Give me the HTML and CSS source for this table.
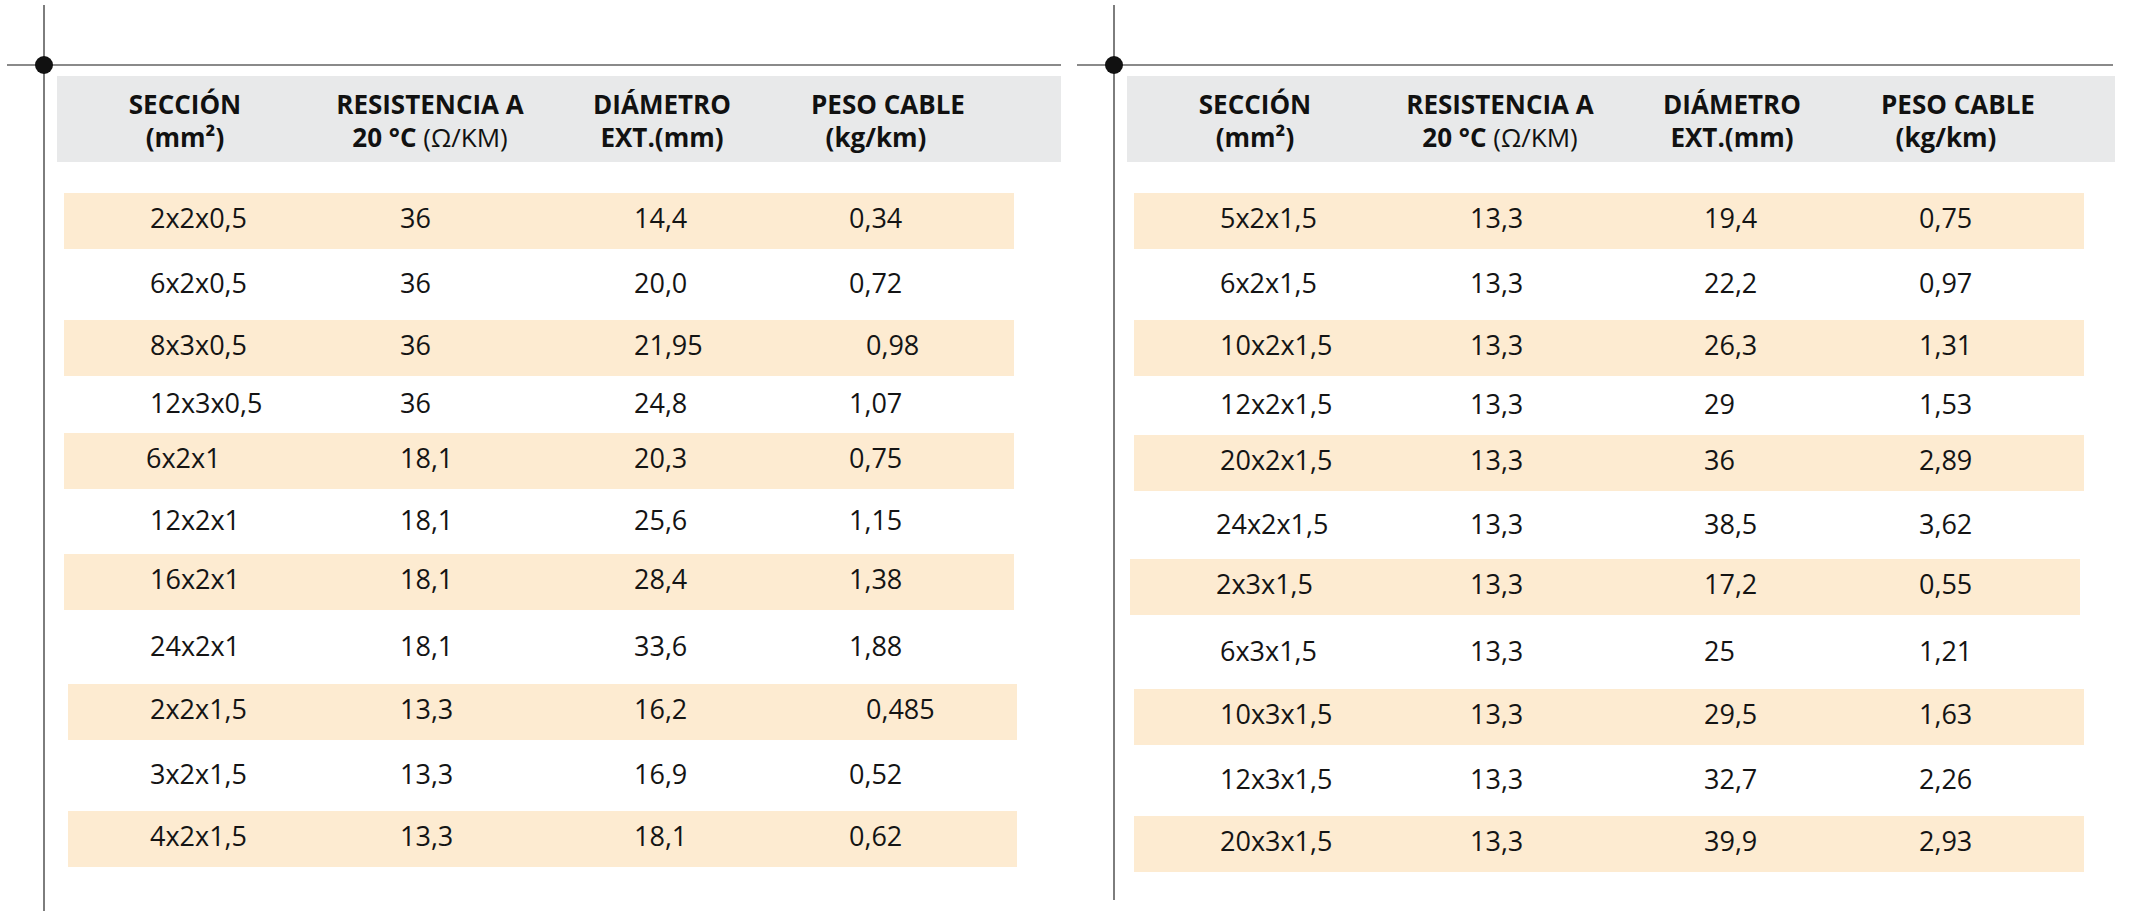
FILE: index.html
```html
<!DOCTYPE html>
<html lang="es">
<head>
<meta charset="utf-8">
<title>Tabla de cables</title>
<link rel="stylesheet" href="styles.css">
</head>
<body>
<div class="sheet">
  <section class="panel panel-a">
    <div class="frame">
      <span class="dot"></span>
      <div class="rule"></div>
      <div class="thead">
        <div class="th">SECCIÓN<br>(mm²)</div>
        <div class="th">RESISTENCIA A<br>20 °C <span class="reg">(Ω/KM)</span></div>
        <div class="th">DIÁMETRO<br>EXT.(mm)</div>
        <div class="th th-last">PESO CABLE<br><span class="unit">(kg/km)</span></div>
      </div>
      <div class="tbody">
        <div class="row hl"><span>2x2x0,5</span><span>36</span><span>14,4</span><span>0,34</span></div>
        <div class="row"><span>6x2x0,5</span><span>36</span><span>20,0</span><span>0,72</span></div>
        <div class="row hl"><span>8x3x0,5</span><span>36</span><span>21,95</span><span class="nudge">0,98</span></div>
        <div class="row"><span>12x3x0,5</span><span>36</span><span>24,8</span><span>1,07</span></div>
        <div class="row hl"><span class="pull">6x2x1</span><span>18,1</span><span>20,3</span><span>0,75</span></div>
        <div class="row"><span>12x2x1</span><span>18,1</span><span>25,6</span><span>1,15</span></div>
        <div class="row hl"><span>16x2x1</span><span>18,1</span><span>28,4</span><span>1,38</span></div>
        <div class="row"><span>24x2x1</span><span>18,1</span><span>33,6</span><span>1,88</span></div>
        <div class="row hl hl-right"><span>2x2x1,5</span><span>13,3</span><span>16,2</span><span class="nudge">0,485</span></div>
        <div class="row"><span>3x2x1,5</span><span>13,3</span><span>16,9</span><span>0,52</span></div>
        <div class="row hl hl-right"><span>4x2x1,5</span><span>13,3</span><span>18,1</span><span>0,62</span></div>
      </div>
    </div>
  </section>
  <section class="panel panel-b">
    <div class="frame">
      <span class="dot"></span>
      <div class="rule"></div>
      <div class="thead">
        <div class="th">SECCIÓN<br>(mm²)</div>
        <div class="th">RESISTENCIA A<br>20 °C <span class="reg">(Ω/KM)</span></div>
        <div class="th">DIÁMETRO<br>EXT.(mm)</div>
        <div class="th th-last">PESO CABLE<br><span class="unit">(kg/km)</span></div>
      </div>
      <div class="tbody">
        <div class="row hl"><span>5x2x1,5</span><span>13,3</span><span>19,4</span><span>0,75</span></div>
        <div class="row"><span>6x2x1,5</span><span>13,3</span><span>22,2</span><span>0,97</span></div>
        <div class="row hl"><span>10x2x1,5</span><span>13,3</span><span>26,3</span><span>1,31</span></div>
        <div class="row"><span>12x2x1,5</span><span>13,3</span><span>29</span><span>1,53</span></div>
        <div class="row hl"><span>20x2x1,5</span><span>13,3</span><span>36</span><span>2,89</span></div>
        <div class="row"><span class="pull">24x2x1,5</span><span>13,3</span><span>38,5</span><span>3,62</span></div>
        <div class="row hl hl-left"><span class="pull">2x3x1,5</span><span>13,3</span><span>17,2</span><span>0,55</span></div>
        <div class="row"><span>6x3x1,5</span><span>13,3</span><span>25</span><span>1,21</span></div>
        <div class="row hl"><span>10x3x1,5</span><span>13,3</span><span>29,5</span><span>1,63</span></div>
        <div class="row"><span>12x3x1,5</span><span>13,3</span><span>32,7</span><span>2,26</span></div>
        <div class="row hl"><span>20x3x1,5</span><span>13,3</span><span>39,9</span><span>2,93</span></div>
      </div>
    </div>
  </section>
</div>
</body>
</html>
```
FILE: styles.css
```css
html, body {
  margin: 0;
  padding: 0;
  background: #ffffff;
}

body {
  font-family: "Open Sans", "Noto Sans", "Liberation Sans", sans-serif;
  color: #141414;
}

.sheet {
  display: flex;
  width: 2129px;
  height: 911px;
  overflow: hidden;
}

.panel {
  flex: none;
  width: 1070px;
  padding-top: 5px;
  box-sizing: border-box;
}

.frame {
  position: relative;
  margin-left: 43px;
  border-left: 2px solid #7d7d7d;
  height: 906px;
  padding-top: 59px;
  box-sizing: border-box;
}

.panel-b .frame {
  height: 895px;
}

.dot {
  position: absolute;
  left: -10px;
  top: 51px;
  width: 18px;
  height: 18px;
  border-radius: 50%;
  background: #111111;
}

.rule {
  height: 2px;
  background: #8a8a8a;
  margin-left: -38px;
  width: 1054px;
}

.panel-b .rule {
  width: 1036px;
}

.thead {
  margin-top: 10px;
  margin-left: 12px;
  width: 1004px;
  height: 86px;
  box-sizing: border-box;
  padding-top: 12px;
  background: #e8e9ea;
  display: grid;
  grid-template-columns: 256px 234px 230px 222px;
}

.panel-b .thead {
  width: 988px;
}

.th {
  text-align: center;
  font-weight: 700;
  font-size: 26px;
  line-height: 33px;
  color: #111111;
}

.th .reg {
  font-weight: 400;
}

.th .unit {
  position: relative;
  left: -12px;
}

.tbody {
  margin-top: 31px;
  margin-left: 19px;
}

.row {
  display: grid;
  grid-template-columns: 250px 234px 215px 1fr;
  align-items: center;
  box-sizing: border-box;
  width: 950px;
  padding-left: 86px;
  padding-bottom: 3px;
  font-size: 27px;
  line-height: 36px;
  white-space: nowrap;
}

.row.hl {
  height: 56px;
  padding-bottom: 7px;
  background: #fdebd1;
}

.row.hl-right {
  margin-left: 4px;
  width: 949px;
  padding-left: 82px;
}

.row.hl-left {
  margin-left: -4px;
  padding-left: 90px;
}

.nudge {
  padding-left: 17px;
}

.pull {
  margin-left: -4px;
}

.panel-a .row:nth-child(2) { height: 71px; }
.panel-a .row:nth-child(4) { height: 57px; }
.panel-a .row:nth-child(6) { height: 65px; }
.panel-a .row:nth-child(8) { height: 74px; }
.panel-a .row:nth-child(10) { height: 71px; }

.panel-b .row:nth-child(2) { height: 71px; }
.panel-b .row:nth-child(4) { height: 59px; }
.panel-b .row:nth-child(6) { height: 68px; }
.panel-b .row:nth-child(8) { height: 74px; }
.panel-b .row:nth-child(10) { height: 71px; }
```
